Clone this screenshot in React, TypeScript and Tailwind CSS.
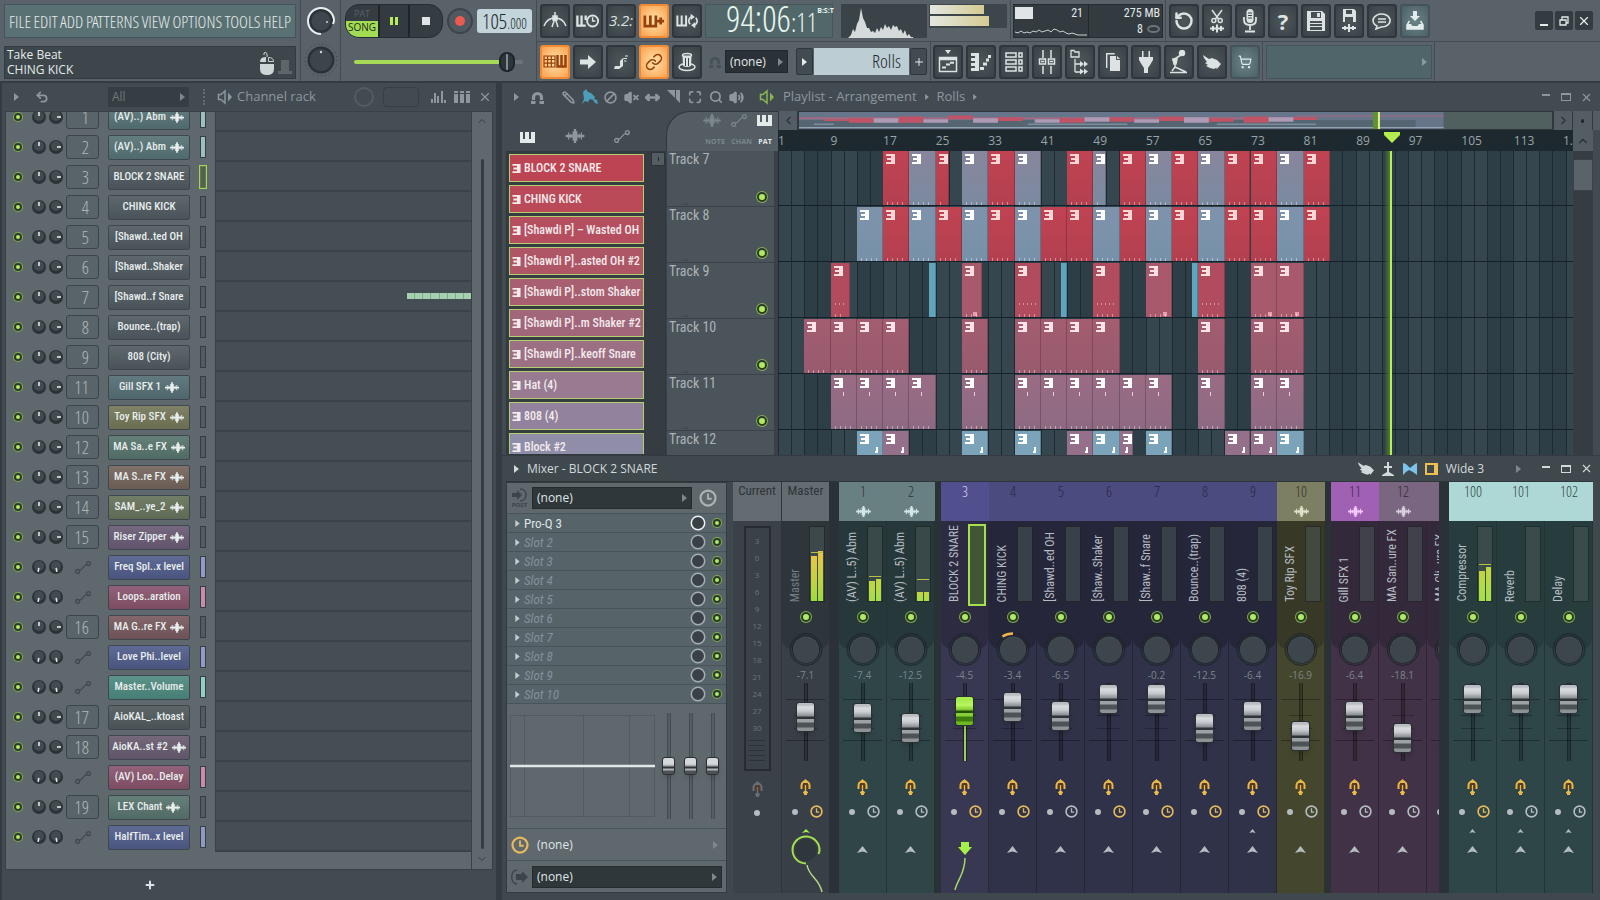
import type { ReactNode } from "react";
import {
  Ban,
  ChevronDown,
  ChevronLeft,
  ChevronRight,
  ChevronUp,
  Link,
  Maximize,
  MoveHorizontal,
  Pencil,
  Plus,
  RotateCcw,
  Search,
  ShoppingCart,
  Undo2,
  Volume2,
  VolumeX,
  X,
} from "lucide-react";

const NARROW =
  "[font-family:'Roboto_Condensed','Liberation_Sans_Narrow','Open_Sans_Condensed','Open_Sans',sans-serif]";
const THIN =
  "[font-family:'Open_Sans_Condensed_Light','Roboto_Condensed','Liberation_Sans_Narrow','Open_Sans_Condensed','Open_Sans',sans-serif]";

const BARS = 121;
const pct = (bars: number) => `${(bars / BARS) * 100}%`;

/* ---------- icons ---------- */

interface IconProps {
  className?: string;
}

const WaveIcon = ({ className = "w-4 h-3" }: IconProps) => (
  <svg viewBox="0 0 16 12" className={className} fill="currentColor">
    <path d="M0 5h16v2H0zM2 3h1v6H2zM4 4h1v4H4zM6 2h1v8H6zM7 0h2v12H7zM9 2h1v8H9zM11 4h1v4h-1zM13 3h1v6h-1z" />
  </svg>
);

const AutoIcon = ({ className = "w-4 h-3" }: IconProps) => (
  <svg viewBox="0 0 16 13" className={className} fill="none" stroke="currentColor" strokeWidth="1.3">
    <circle cx="2.6" cy="10.4" r="1.9" />
    <circle cx="13.4" cy="2.6" r="1.9" />
    <path d="M4.2 9.4c2-.5 2.600-1 3.800-2.900s2-2.500 3.600-3" />
  </svg>
);

const PianoIcon = ({ className = "w-4 h-3" }: IconProps) => (
  <svg viewBox="0 0 15 11" className={className} fill="currentColor">
    <path d="M0 0h3v7h2V0h1v0h3v7h2V0h4v11H0z" />
  </svg>
);

const ClipIcon = ({ className = "w-[9px] h-[10px]" }: IconProps) => (
  <svg viewBox="0 0 9 10" className={className} fill="currentColor">
    <path d="M0 0h9v10H0V8h5V6H1V4h4V2H0z" />
  </svg>
);

const MagnetIcon = ({ className = "w-[13px] h-[13px]" }: IconProps) => (
  <svg viewBox="0 0 13 13" className={className}>
    <path d="M2.500 9V6.500a4 4 0 0 1 8 0V9" fill="none" stroke="currentColor" strokeWidth="3.200" />
    <path d="M0 10h4.500v3H0zM8.500 10H13v3H8.500z" fill="currentColor" />
  </svg>
);

const Arrow = ({ className = "w-[5px] h-2" }: IconProps) => (
  <svg viewBox="0 0 5 8" className={className} fill="currentColor">
    <path d="M0 0l5 4-5 4z" />
  </svg>
);

const Clock = ({ className = "w-3 h-3" }: IconProps) => (
  <svg viewBox="0 0 12 12" className={className} fill="none" stroke="currentColor" strokeWidth="1.5">
    <circle cx="6" cy="6" r="5" />
    <path d="M6 3v3.500h2.500" strokeWidth="1.200" />
  </svg>
);

const Speaker = ({ className = "w-4 h-4" }: IconProps) => (
  <svg viewBox="0 0 16 16" className={className}>
    <path d="M8 2v12L4 10.500H1.500v-5H4z" fill="none" stroke="currentColor" strokeWidth="1.500" />
    <path d="M11 3.500l4 4.500-4 4.500z" fill="currentColor" />
  </svg>
);

const MetronomeIcon = () => (
  <svg viewBox="0 0 24 18" className="h-[18px] w-6" fill="none" stroke="currentColor" strokeWidth="1.500">
    <path d="M1 14Q4 6 12 6q8 0 11 8" />
    <path d="M12 0v5M9 15l3-9 3 9" />
    <path d="M10 4h4v4h-4z" fill="currentColor" />
  </svg>
);

const WaitIcon = () => (
  <svg viewBox="0 0 26 16" className="h-4 w-6" fill="none" stroke="currentColor">
    <path d="M1.500 2v11h9M6 2v11M10.500 2v5" strokeWidth="2.500" />
    <circle cx="18" cy="8" r="6" strokeWidth="2" />
    <path d="M18 4v4h3" strokeWidth="1.500" />
  </svg>
);

const OverdubIcon = () => (
  <svg viewBox="0 0 24 14" className="h-[14px] w-[22px]" fill="none" stroke="currentColor" strokeWidth="3">
    <path d="M2 1v11.500h12V1M8 1v11M15.500 7H23M19.300 3.300v7.400" />
  </svg>
);

const LoopIcon = () => (
  <svg viewBox="0 0 24 16" className="h-4 w-[22px]" fill="none" stroke="currentColor">
    <path d="M1.500 2v11H11V2M6.200 2v11" strokeWidth="2.200" />
    <path d="M16.500 3.500a5 5 0 0 0-1 8M20.500 12.500a5 5 0 0 0 1-8" strokeWidth="1.800" />
    <path d="M16 0l4.500 3.500L16 7zM21 9l-4.500 3.500L21 16z" fill="currentColor" stroke="none" />
  </svg>
);

const StepIcon = () => (
  <svg viewBox="0 0 24 14" className="h-[14px] w-6" fill="none" stroke="currentColor" strokeWidth="1.200">
    <path d="M1 1h11v11H1zM1 4.500h11M1 8.200h11M4.600 1v11M8.300 1v11" />
    <path d="M14.500 0v11.500h8V0M18.500 0v11" strokeWidth="2.500" />
  </svg>
);

const FatArrow = () => (
  <svg viewBox="0 0 16 14" className="h-[14px] w-4" fill="currentColor">
    <path d="M0 4.500h8V0l8 7-8 7V9.500H0z" />
  </svg>
);

const NoteIcon = () => (
  <svg viewBox="0 0 16 16" className="h-4 w-4" fill="currentColor">
    <path d="M1 15l1-3h5V7l3-3h1l-1 2v6l-4 3zM11 4h3v1h-3zM11 6.500h2.500v1H11zM12 1.500h3v1h-3z" />
  </svg>
);

const GlassIcon = () => (
  <svg viewBox="0 0 20 20" className="h-5 w-5" fill="none" stroke="currentColor" strokeWidth="1.500">
    <ellipse cx="10" cy="15" rx="8" ry="3.500" />
    <path d="M6 14L5.500 3.500h9L14 14q-4 2-8 0z" fill="currentColor" stroke="none" />
    <ellipse cx="10" cy="3.200" rx="4.500" ry="1.700" />
    <path d="M8.500 6v8M11.500 6v8" stroke="#3a4248" strokeWidth="1" />
  </svg>
);

const PlaylistIcon = () => (
  <svg viewBox="0 0 20 24" className="h-6 w-5" fill="none" stroke="currentColor">
    <path d="M7 0h6l-3 4z" fill="currentColor" stroke="none" />
    <path d="M1.500 7.500h17v14h-17z" strokeWidth="1.500" />
    <path d="M1.500 9h17" strokeWidth="2.500" />
    <path d="M4 17.500h4M8 14.500h4M12 12.800h4" strokeWidth="2" />
  </svg>
);

const PianoRollIcon = () => (
  <svg viewBox="0 0 20 18" className="h-[18px] w-5" fill="currentColor">
    <path d="M0 0h8v18H0v-3h4v-2H0v-3h4V8H0V5h4V3H0z" />
    <path d="M9 14h4v3H9zM12 9.500h4v3h-4zM15 5.500h3v3h-3zM17 2h3v3h-3z" />
  </svg>
);

const RackIcon = () => (
  <svg viewBox="0 0 18 20" className="h-5 w-[18px]" fill="none" stroke="currentColor" strokeWidth="1.500">
    <path d="M1 1h10v4H1zM1 8h10v4H1zM1 15h10v4H1zM14 1h3v4h-3zM14 8h3v4h-3zM14 15h3v4h-3z" />
  </svg>
);

const MixerIcon = () => (
  <svg viewBox="0 0 18 24" className="h-6 w-[18px]" fill="none" stroke="currentColor" strokeWidth="1.500">
    <path d="M5 0v8M5 16v8M13 0v8M13 16v8M1.500 9h6v5h-6zM10.500 9h6v5h-6zM3 11.500h3M12 11.500h3" />
  </svg>
);

const BrowserIcon = () => (
  <svg viewBox="0 0 20 26" className="h-[26px] w-5" fill="none" stroke="currentColor" strokeWidth="1.300">
    <path d="M1 1.500h3l1 1.500h4v5H1zM5 10v13M5 15h5M5 23h5" />
    <path d="M10 12l4 3-4 3zM14 12l4 3-4 3zM10 19.500l4 3-4 3zM14 19.500l4 3-4 3z" fill="currentColor" stroke="none" />
  </svg>
);

const PagesIcon = () => (
  <svg viewBox="0 0 14 18" className="h-[18px] w-[14px]" fill="currentColor">
    <path d="M4 3h6v4h4v11H4z" />
    <path d="M11 3l3 3h-3z" />
    <path d="M.7 15V.7h8" fill="none" stroke="currentColor" strokeWidth="1.400" />
  </svg>
);

const PlugIcon = () => (
  <svg viewBox="0 0 14 22" className="h-[22px] w-[14px]" fill="currentColor">
    <path d="M3 0h1.500v6H3zM9.500 0H11v6H9.500zM0 6h14v3l-3 5-2 3v5H5v-5l-2-3-3-5z" />
  </svg>
);

const LeverIcon = () => (
  <svg viewBox="0 0 18 24" className="h-6 w-[18px]" fill="none" stroke="currentColor" strokeWidth="1.500">
    <circle cx="12" cy="3" r="2.500" fill="currentColor" />
    <path d="M11 5L3 10l2 3v4l-3 4M5 17l11 5M0 22.500h17" />
    <path d="M3 9h4l-1 5H4z" fill="currentColor" />
  </svg>
);

const HandIcon = ({ className = "w-[18px] h-[14px]" }: IconProps) => (
  <svg viewBox="0 0 18 14" className={className} fill="currentColor">
    <path d="M0 0l6 4 3-1 5 2 3 3-1 3-5 3-4-1-4-2 2-1-3-2 2-1L1 3z" />
    <path d="M17 8l1 1-4 5-1-1z" />
  </svg>
);

const DownloadIcon = () => (
  <svg viewBox="0 0 18 20" className="h-5 w-[18px]" fill="currentColor">
    <path d="M7 0h4v5h3L9 10 4 5h3z" />
    <path d="M3.500 10L1 14v4h16v-4l-2.500-4" fill="none" stroke="currentColor" strokeWidth="1.500" />
    <path d="M1 13h4l1.500 2h5L13 13h4v5H1z" />
  </svg>
);

const SaveIcon = () => (
  <svg viewBox="0 0 18 20" className="h-5 w-[18px]" fill="currentColor">
    <path fillRule="evenodd" d="M0 0h15l3 3v17H0zM4 1v6h10V1zM3 10v9h12v-9z" />
    <path d="M10 2h3v4h-3zM3 12h12v1H3zM3 15h12v1H3z" />
  </svg>
);

const SaveWaveIcon = () => (
  <svg viewBox="0 0 16 24" className="h-6 w-4" fill="currentColor">
    <path fillRule="evenodd" d="M2 0h11l2 2v11H2zM5 1v4h6V1zM4 8v5h8V8z" />
    <path d="M1 18h14v2H1zM3 17h2v4H3zM7 15h2v8H7zM11 17h2v4h-2z" />
  </svg>
);

const ScissorsWave = () => (
  <svg viewBox="0 0 16 24" className="h-6 w-4" fill="currentColor">
    <path d="M3 1l6.500 9M13 1L6.500 10" fill="none" stroke="currentColor" strokeWidth="1.500" />
    <circle cx="4.800" cy="11.500" r="2" fill="none" stroke="currentColor" strokeWidth="1.400" />
    <circle cx="11.200" cy="11.500" r="2" fill="none" stroke="currentColor" strokeWidth="1.400" />
    <path d="M1 18.500h14v2H1zM3 17h2v5H3zM7 15.500h2v8H7zM11 17h2v5h-2z" />
  </svg>
);

const MicIcon = () => (
  <svg viewBox="0 0 14 24" className="h-6 w-[14px]">
    <rect x="3.500" y="0" width="7" height="14" rx="3.500" fill="currentColor" />
    <path d="M1 8v3q0 5 6 5t6-5V8M7 16v5M2 22.500h10" fill="none" stroke="currentColor" strokeWidth="1.800" />
    <path d="M5 4h4M5 6.500h4M5 9h4" stroke="#3a4248" strokeWidth="1" />
  </svg>
);

const BubbleIcon = () => (
  <svg viewBox="0 0 20 18" className="h-[18px] w-5" fill="none" stroke="currentColor" strokeWidth="1.600">
    <path d="M5 14a8.500 6.500 0 1 1 4 1l-5 2z" />
    <path d="M6 7h8M6 10h8" />
  </svg>
);

const RouteIcon = ({ className = "w-[11px] h-4 text-[#e8b848]" }: IconProps) => (
  <svg viewBox="0 0 11 16" className={className}>
    <path d="M1.500 10V6.500a4 4 0 0 1 8 0V10" fill="#5c3a1c" fillOpacity=".7" stroke="currentColor" strokeWidth="2" />
    <path d="M5.500 0l4 4h-8zM4 12h3v4H4z" fill="currentColor" />
    <path d="M5.500 6v8M3 13.500h5" fill="none" stroke="currentColor" strokeWidth="1.300" />
  </svg>
);

const UpTri = ({ className = "w-[11px] h-[7px]" }: IconProps) => (
  <svg viewBox="0 0 11 7" className={className} fill="currentColor">
    <path d="M5.500 0L11 7l-5.500-1.500L0 7z" />
  </svg>
);

/* ---------- small controls ---------- */

const Led = ({ label, big }: { label: string; big?: boolean }) => (
  <input
    type="checkbox"
    defaultChecked
    aria-label={label}
    className={`shrink-0 appearance-none rounded-full border-2 border-[#2c3a2a] bg-[#aeea62] ring-1 ring-[#7fae4c] ${
      big ? "h-[10px] w-[10px]" : "h-2 w-2"
    }`}
  />
);

const MiniKnob = ({ angle }: { angle: number }) => (
  <svg viewBox="0 0 14 14" className="h-[14px] w-[14px] shrink-0">
    <circle cx="7" cy="7" r="7" fill="#2c3338" />
    <circle cx="7" cy="6" r="5" fill="#434b51" />
    <path d="M7 6V2" stroke="#dfe6e8" strokeWidth="1.600" transform={`rotate(${angle} 7 7)`} />
  </svg>
);

const Knob = ({ pan }: { pan?: boolean }) => (
  <svg viewBox="0 0 36 36" className="-mb-[18px] h-9 w-9 shrink-0">
    <circle cx="18" cy="18.500" r="16" fill="#2b3238" fillOpacity=".4" stroke="#171c20" strokeOpacity=".6" />
    <circle cx="18" cy="18.500" r="14" fill="#1e2428" />
    <circle cx="18" cy="18.500" r="13" fill="#465056" />
    <circle cx="18" cy="19.200" r="12.800" fill="#3d464c" />
    {pan && <path d="M7.500 5.500Q12 2.500 18 2.500" fill="none" stroke="#eeb44e" strokeWidth="2.500" />}
  </svg>
);

interface PickProps {
  label: string;
  value: string;
  className: string;
}

const Pick = ({ label, value, className }: PickProps) => (
  <div className={`relative flex items-center ${className}`}>
    <select aria-label={label} className="h-full w-full appearance-none bg-transparent pl-1 pr-3 outline-none">
      <option>{value}</option>
    </select>
    <Arrow className="pointer-events-none absolute right-1 h-2 w-[5px] text-[#7d878c]" />
  </div>
);

const WindowButtons = ({ className = "" }: IconProps) => (
  <div className={`flex ${className}`}>
    <button aria-label="Minimize" className="flex h-5 w-5 items-center justify-center pb-1">
      <span className="h-[2px] w-2 bg-current" />
    </button>
    <button aria-label="Maximize" className="flex h-5 w-5 items-center justify-center">
      <span className="h-2 w-[10px] border border-t-2 border-current" />
    </button>
    <button aria-label="Close" className="flex h-5 w-5 items-center justify-center">
      <X size={13} />
    </button>
  </div>
);

interface ToolProps {
  label: string;
  children: ReactNode;
  on?: boolean;
  teal?: boolean;
}

const Tool = ({ label, children, on, teal }: ToolProps) => (
  <button
    aria-label={label}
    className={`flex h-[34px] w-[30px] shrink-0 items-center justify-center rounded-[3px] border-2 ${
      on
        ? "border-[#f08a35] bg-radial from-[#ffe3a8] to-[#f9a04c] text-[#96420c]"
        : teal
          ? "border-[#45545a] bg-radial from-[#6a8488] to-[#4c6064] text-[#e3ecec]"
          : "border-[#2f373d] bg-radial from-[#4d5759] to-[#3a4248] text-[#dde3e3]"
    }`}
  >
    {children}
  </button>
);

const Sep = () => <div className="w-px self-stretch bg-[#434c52]" />;

/* ---------- top bar ---------- */

const MENUS = ["FILE", "EDIT", "ADD", "PATTERNS", "VIEW", "OPTIONS", "TOOLS", "HELP"];

const TopBar = () => (
  <header className="flex h-[83px] border-b-2 border-[#343b41] bg-[#586268] text-[#e3eaea]">
    <div className="flex w-[300px] flex-col gap-2 py-1 pl-1 pr-1">
      <nav className={`flex h-[34px] shrink-0 items-center justify-between border border-[#44545a] bg-[#5a7173] px-1 text-[17px] ${THIN}`}>
        {MENUS.map((m) => (
          <a key={m} href="#" className="leading-none">
            {m}
          </a>
        ))}
      </nav>
      <div className="flex h-[33px] shrink-0 items-center justify-between border border-[#333b40] bg-[#3d464a] px-[2px] text-[12px] leading-[15px]">
        <div className="pb-[2px]">
          <div>Take Beat</div>
          <div>CHING KICK</div>
        </div>
        <div className="flex items-end gap-1 pr-px">
          <svg viewBox="0 0 14 24" className="h-6 w-[14px]" fill="#cdd5d6">
            <path d="M0 11q0-5 6-5v5H0zM0 13h14v5q0 6-7 6t-7-6z" />
            <path d="M8.500 6.500q5 0 5 4h-5zM7 6V3q-1-3-3-1v2" fill="none" stroke="#cdd5d6" />
          </svg>
          <svg viewBox="0 0 14 16" className="h-4 w-[14px]" fill="#5c666b">
            <path d="M3 1h8v11h3v3H0v-3h3z" />
          </svg>
        </div>
      </div>
    </div>
    <Sep />
    <div className="flex w-[39px] flex-col items-center justify-between py-[3px]">
      <svg viewBox="0 0 36 36" className="h-9 w-9">
        <circle cx="18" cy="18" r="12" fill="#2d3439" />
        <circle cx="18" cy="18" r="9.500" fill="#3e474d" />
        <path d="M18 31A13 13 0 1 1 31 18l-1 3" fill="none" stroke="#e9efef" strokeWidth="2" />
        <circle cx="24" cy="19" r="1" fill="#cfd6d8" />
      </svg>
      <svg viewBox="0 0 36 36" className="h-9 w-9">
        <circle cx="18" cy="18" r="16" fill="none" stroke="#394146" strokeDasharray="1 3" />
        <circle cx="18" cy="18" r="13.500" fill="#2b3237" />
        <circle cx="18" cy="18" r="11" fill="#3c454b" />
        <circle cx="18" cy="10" r="1.200" fill="#cfd6d8" />
      </svg>
    </div>
    <Sep />
    <div className="flex w-[195px] flex-col">
      <div className="flex h-[42px] items-center gap-1 pl-1">
        <div className="flex h-[34px] w-[98px] overflow-hidden rounded-[14px] border border-[#262c31] bg-[#353d43] text-[11px] leading-none">
          <button className="flex w-8 flex-col text-center">
            <span className="flex h-4 w-full items-center justify-center text-[9px] text-[#586268]">PAT</span>
            <span className="flex w-full flex-1 items-center justify-center bg-[#a2dc55] pb-1 text-[10px] text-[#1d2a16]">SONG</span>
          </button>
          <button aria-label="Pause" className="flex w-[32px] items-center justify-center gap-[2px] border-x-2 border-[#1f262b] bg-[#333b41]">
            <span className="h-2 w-[3px] bg-[#b5ec5c]" />
            <span className="h-2 w-[3px] bg-[#b5ec5c]" />
          </button>
          <button aria-label="Stop" className="flex flex-1 items-center justify-center">
            <span className="h-2 w-2 bg-[#dfe5e6]" />
          </button>
        </div>
        <button aria-label="Record" className="flex h-[26px] w-[26px] items-center justify-center rounded-full border-2 border-[#3b444a] bg-[#4f595f]">
          <span className="h-[10px] w-[10px] rounded-full bg-[#ee5a50]" />
        </button>
        <div className={`flex h-6 w-[55px] items-baseline justify-center rounded-[3px] bg-[#c3d4da] text-[#22292d] ${THIN}`}>
          <span className="text-[21px] leading-6">105</span>
          <span className="text-[14px] leading-6">.000</span>
        </div>
      </div>
      <div className="flex flex-1 items-center px-[13px]">
        <input
          type="range"
          aria-label="Master pitch"
          defaultValue={95}
          className="h-1 w-full appearance-none rounded-full bg-linear-to-r from-[#a6d956] from-90% to-[#6b757a] to-90% [&::-webkit-slider-thumb]:h-5 [&::-webkit-slider-thumb]:w-4 [&::-webkit-slider-thumb]:appearance-none [&::-webkit-slider-thumb]:rounded-full [&::-webkit-slider-thumb]:border-2 [&::-webkit-slider-thumb]:border-[#1f262a] [&::-webkit-slider-thumb]:bg-linear-to-r [&::-webkit-slider-thumb]:from-[#2e363b] [&::-webkit-slider-thumb]:from-40% [&::-webkit-slider-thumb]:via-[#c7d0d0] [&::-webkit-slider-thumb]:to-[#2e363b] [&::-webkit-slider-thumb]:to-60%"
        />
      </div>
    </div>
    <Sep />
    <div className="flex min-w-0 flex-1 flex-col">
      <div className="flex h-[42px] items-center border-b border-[#434c52]">
        <div className="flex items-center gap-[3px] px-[3px]">
          <Tool label="Metronome"><MetronomeIcon /></Tool>
          <Tool label="Wait for input"><WaitIcon /></Tool>
          <Tool label="Countdown"><span className="text-[15px] italic">3.2:</span></Tool>
          <Tool label="Overdub" on><OverdubIcon /></Tool>
          <Tool label="Loop record"><LoopIcon /></Tool>
        </div>
        <div className="flex h-[34px] w-[128px] items-center justify-between border border-[#46565a] bg-[#51676a] pl-5 pr-[2px] text-[#e6f5ee]">
          <div className={`flex items-baseline ${THIN}`}>
            <span className="text-[36px] leading-8">94:06</span>
            <span className="text-[26px] leading-8">:11</span>
          </div>
          <span className="self-start text-[7px] font-bold leading-[12px]">B:S:T</span>
        </div>
        <div className="flex items-start pl-2 pr-[3px]">
          <svg viewBox="0 0 86 34" className="h-[34px] w-[86px] bg-[#3a4348]" fill="#d5dadb">
            <path d="M7 34l3-3 2-6 2 3 2-8 2-4 2-12 2 10 2 4 2 6 2 0 2 4 2-1 2 2 2-5 2 4 2-5 2 3 2-6 2 4 2-2 2 4 2-5 2 2 2-1 2 5 2-2 2 5 2-4 2 6 2-2 2 3 2 0 1 3z" />
          </svg>
          <div className="ml-[2px] flex h-6 w-[78px] flex-col justify-center gap-[2px] bg-[#3d464b] pl-px">
            <div className="h-[9px] w-[54px] bg-linear-to-r from-[#e3e6e1] to-[#d5cb92]" />
            <div className="h-[10px] w-[59px] bg-linear-to-r from-[#e3e6e1] to-[#d5cb92]" />
          </div>
        </div>
        <Sep />
        <div className={`mx-[2px] flex h-[34px] w-[150px] border border-[#262d31] bg-[#333b40] text-[12px] leading-none ${NARROW}`}>
          <div className="flex w-[75px] flex-col justify-between border-r border-[#22292d] p-px">
            <div className="flex justify-between pr-1 pt-px">
              <span className="h-3 w-[18px] bg-[#dfe4e6]" />
              <span>21</span>
            </div>
            <svg viewBox="0 0 72 8" className="h-2 w-full" fill="none" stroke="#c8d0d2">
              <path d="M0 4l3 1 3-2 3 2 3-1 3 1 3-2 3 1 3-2 3 2 3-1 3-1 3 2 3-3 3 1 3 2 3-1 3 2 3 1 3-1 3 1 3 1h9" />
            </svg>
          </div>
          <div className="flex flex-1 flex-col items-end justify-between py-[2px] pr-[2px]">
            <span>275 MB</span>
            <span className="flex items-center gap-1">
              8
              <svg viewBox="0 0 13 8" className="h-2 w-[13px]" fill="none" stroke="#6b757a" strokeWidth="2">
                <ellipse cx="6.500" cy="4" rx="5.500" ry="3" />
              </svg>
            </span>
          </div>
        </div>
        <Sep />
        <div className="flex items-center gap-[3px] px-[3px]">
          <Tool label="Undo"><RotateCcw size={20} strokeWidth={3} /></Tool>
          <Tool label="Cut"><ScissorsWave /></Tool>
          <Tool label="Record audio"><MicIcon /></Tool>
          <Tool label="Help"><span className="text-[22px] font-bold leading-none">?</span></Tool>
          <Tool label="Save"><SaveIcon /></Tool>
          <Tool label="Render"><SaveWaveIcon /></Tool>
          <Tool label="News"><BubbleIcon /></Tool>
          <Tool label="Download" teal><DownloadIcon /></Tool>
        </div>
        <div className="ml-auto flex gap-[2px] pr-[7px]">
          <button aria-label="Minimize" className="flex h-[19px] w-[18px] items-end justify-center rounded-[2px] bg-[#343c42] pb-1">
            <span className="h-[2px] w-2 bg-[#e3eaea]" />
          </button>
          <button aria-label="Restore" className="flex h-[19px] w-[18px] items-center justify-center rounded-[2px] bg-[#343c42]">
            <svg viewBox="0 0 10 10" className="h-[10px] w-[10px]" fill="none" stroke="currentColor" strokeWidth="1.300">
              <path d="M1 4h6v5H1zM3 4V1h6v6H7" />
            </svg>
          </button>
          <button aria-label="Close" className="flex h-[19px] w-[18px] items-center justify-center rounded-[2px] bg-[#343c42]">
            <X size={14} />
          </button>
        </div>
      </div>
      <div className="flex flex-1 items-center">
        <div className="flex items-center gap-[3px] px-[3px]">
          <Tool label="Typing keyboard" on><StepIcon /></Tool>
          <Tool label="Auto scroll"><FatArrow /></Tool>
          <Tool label="Note slide"><NoteIcon /></Tool>
          <Tool label="Link" on><Link size={18} /></Tool>
          <Tool label="Multilink"><GlassIcon /></Tool>
        </div>
        <MagnetIcon className="ml-1 h-3 w-3 text-[#475157]" />
        <Pick label="Snap" value="(none)" className="ml-1 h-[23px] w-[63px] border border-[#22292d] bg-[#2b3237] text-[12px]" />
        <div className="ml-2 flex h-[27px] items-stretch gap-px">
          <button aria-label="Pattern menu" className="flex w-[17px] items-center justify-center rounded-[2px] border border-[#2f373d] bg-[#424b51]">
            <Arrow />
          </button>
          <button className={`w-[95px] bg-[#bccdd3] pr-2 text-right text-[19px] leading-none text-[#22292d] ${THIN}`}>Rolls</button>
          <button aria-label="Add pattern" className="flex w-[17px] items-center justify-center rounded-[2px] border border-[#2f373d] bg-[#424b51]">
            <Plus size={12} />
          </button>
        </div>
        <div className="ml-[3px] flex self-stretch"><Sep /></div>
        <div className="flex items-center gap-[3px] px-[2px]">
          <Tool label="Playlist"><PlaylistIcon /></Tool>
          <Tool label="Piano roll"><PianoRollIcon /></Tool>
          <Tool label="Channel rack"><RackIcon /></Tool>
          <Tool label="Mixer"><MixerIcon /></Tool>
          <Tool label="Browser"><BrowserIcon /></Tool>
          <Tool label="Project picker"><PagesIcon /></Tool>
          <Tool label="Plugin picker"><PlugIcon /></Tool>
          <Tool label="Tempo tapper"><LeverIcon /></Tool>
          <Tool label="Touch"><HandIcon /></Tool>
          <Tool label="Shop" teal><ShoppingCart size={14} /></Tool>
        </div>
        <Sep />
        <div className="ml-[3px] mr-[2px] flex h-[34px] w-[166px] items-center justify-end border border-[#44545a] bg-[#50656a] pr-1 text-[#8a9a9c]">
          <Arrow />
        </div>
        <Sep />
      </div>
    </div>
  </header>
);

/* ---------- channel rack ---------- */

interface Channel {
  name: string;
  num?: number;
  tone: string;
  wave?: boolean;
  level?: string;
  selected?: boolean;
}

const GREY = "from-[#5d676c] to-[#495359]";
const TEAL = "from-[#647e80] to-[#4f6a6c]";
const BLUE = "from-[#5f6b94] to-[#4a557f]";
const PINK = "from-[#91627a] to-[#7d4c62]";

const CHANNELS: Channel[] = [
  { num: 1, name: "(AV)..) Abm", tone: TEAL, wave: true, level: "bg-[#9cc0c0]" },
  { num: 2, name: "(AV)..) Abm", tone: TEAL, wave: true, level: "bg-[#9cc0c0]" },
  { num: 3, name: "BLOCK 2 SNARE", tone: GREY, selected: true },
  { num: 4, name: "CHING KICK", tone: GREY },
  { num: 5, name: "[Shawd..ted OH", tone: GREY },
  { num: 6, name: "[Shawd..Shaker", tone: GREY },
  { num: 7, name: "[Shawd..f Snare", tone: GREY },
  { num: 8, name: "Bounce..(trap)", tone: GREY },
  { num: 9, name: "808 (City)", tone: GREY },
  { num: 11, name: "Gill SFX 1", tone: "from-[#62797f] to-[#4f666c]", wave: true },
  { num: 10, name: "Toy Rip SFX", tone: "from-[#7f8266] to-[#6a6d50]", wave: true },
  { num: 12, name: "MA Sa..e FX", tone: "from-[#648078] to-[#4f6b64]", wave: true },
  { num: 13, name: "MA S..re FX", tone: "from-[#80726a] to-[#6a5c52]", wave: true },
  { num: 14, name: "SAM_..ye_2", tone: "from-[#727d68] to-[#5e6a54]", wave: true },
  { num: 15, name: "Riser Zipper", tone: "from-[#75687f] to-[#60536b]", wave: true },
  { name: "Freq Spl..x level", tone: BLUE, level: "bg-[#919acb]" },
  { name: "Loops..aration", tone: PINK, level: "bg-[#c98bab]" },
  { num: 16, name: "MA G..re FX", tone: "from-[#83676c] to-[#6c5256]", wave: true },
  { name: "Love Phi..level", tone: BLUE, level: "bg-[#919acb]" },
  { name: "Master..Volume", tone: "from-[#5c9489] to-[#467d74]", level: "bg-[#8fd0c3]" },
  { num: 17, name: "AioKAL_..ktoast", tone: "from-[#5d676a] to-[#495356]" },
  { num: 18, name: "AioKA..st #2", tone: "from-[#75687a] to-[#5f5468]", wave: true },
  { name: "(AV) Loo..Delay", tone: PINK, level: "bg-[#c98bab]" },
  { num: 19, name: "LEX Chant", tone: "from-[#667f79] to-[#526a65]", wave: true },
  { name: "HalfTim..x level", tone: BLUE, level: "bg-[#8c9ac4]" },
];

const ChannelRow = ({ ch, notes }: { ch: Channel; notes?: boolean }) => (
  <li className="flex h-[30px] items-center">
    <div className="flex w-[60px] items-center justify-between pl-2 pr-[3px]">
      <Led label={`${ch.name} on`} />
      <div className="flex gap-[3px]">
        <MiniKnob angle={ch.num ? 0 : 190} />
        <MiniKnob angle={ch.num ? 90 : 170} />
      </div>
    </div>
    <div className="flex w-[33px] justify-center">
      {ch.num ? (
        <span className={`flex h-6 w-full items-center justify-end rounded-[3px] border border-[#3c454b] bg-[#59636a] pr-[9px] text-[18px] text-[#aeb8bb] ${THIN}`}>
          {ch.num}
        </span>
      ) : (
        <AutoIcon className="h-[13px] w-4 text-[#3f484e]" />
      )}
    </div>
    <button
      className={`ml-[9px] flex h-[25px] w-[82px] items-center justify-center gap-1 overflow-hidden whitespace-nowrap rounded-[2px] border border-[#3e474d] bg-linear-to-b px-[3px] text-[11px] font-medium text-[#e8eded] ${NARROW} ${ch.tone}`}
    >
      <span>{ch.name}</span>
      {ch.wave && <WaveIcon className="h-[11px] w-[14px] shrink-0" />}
    </button>
    <div
      className={`ml-[9px] flex h-6 w-2 border-2 p-px ${
        ch.selected ? "border-[#a5d653] bg-[#56693f]" : "border-transparent"
      }`}
    >
      <span className={`-m-[2px] flex-1 border border-[#363e44] ${ch.level ?? "bg-[#525b61]"} ${ch.selected ? "opacity-60" : ""}`} />
    </div>
    <div className="ml-2 flex h-full flex-1 items-center justify-end border-b-2 border-l border-[#3b4349] bg-[#464e55]">
      {notes && (
        <div className="flex h-[6px] w-16 gap-px bg-[#7fa98a]">
          {Array.from({ length: 8 }, (_, i) => (
            <span key={i} className="flex-1 bg-[#a5cfb0]" />
          ))}
        </div>
      )}
    </div>
  </li>
);

const ChannelRack = () => (
  <section className="flex w-[498px] shrink-0 flex-col border-x-2 border-[#343b41] bg-[#434b52]">
    <div className="flex h-7 items-center px-3 text-[#8d979c]">
      <Arrow />
      <Undo2 size={14} strokeWidth={3} className="ml-4" />
      <Pick label="Channel filter" value="All" className="ml-[59px] h-5 w-[81px] bg-[#363d43] text-[12px] text-[#6d777c]" />
      <span className="ml-[14px] h-4 border-l-2 border-dotted border-[#646e74]" />
      <Speaker className="ml-3 h-4 w-4" />
      <h2 className="ml-1 text-[13px]">Channel rack</h2>
      <span className="ml-auto h-5 w-5 rounded-full border-2 border-[#535c62]" />
      <span className="ml-[9px] h-5 w-9 rounded-[4px] border border-[#373f45]" />
      <svg viewBox="0 0 15 12" className="ml-3 h-3 w-[15px]" fill="currentColor">
        <path d="M0 8h2v4H0zM3 2h2v10H3zM6 5h2v7H6zM10 0h2v12h-2zM13 9h2v3h-2z" />
      </svg>
      <svg viewBox="0 0 16 12" className="ml-2 h-3 w-4" fill="currentColor">
        <path d="M0 0h4v2H0zM0 3h4v9H0zM6 0h4v2H6zM6 3h4v9H6zM12 0h4v2h-4zM12 3h4v9h-4z" />
      </svg>
      <X size={14} className="-mr-2 ml-2" />
    </div>
    <div className="mx-[3px] flex flex-1 border border-[#394147] bg-[#5f686d]">
      <div className="min-w-0 flex-1 overflow-hidden border-r border-[#394147]">
        <ul className="-mt-[10px]">
          {CHANNELS.map((ch, i) => (
            <ChannelRow key={i} ch={ch} notes={i === 6} />
          ))}
        </ul>
      </div>
      <div className="flex w-5 flex-col items-center pb-1 pt-[3px] text-[#363e44]">
        <ChevronUp size={12} />
        <span className="mt-8 w-[3px] flex-1 rounded-full bg-[#363e44]" />
        <ChevronDown size={12} className="mt-1" />
      </div>
    </div>
    <div className="flex h-[30px] items-center pl-[142px] text-[#dfe5e6]">
      <button aria-label="Add channel"><Plus size={12} strokeWidth={4} /></button>
    </div>
  </section>
);

/* ---------- playlist ---------- */

const PATTERNS = [
  { name: "BLOCK 2 SNARE", tone: "bg-[#bd4452]" },
  { name: "CHING KICK", tone: "bg-[#ba4a58]" },
  { name: "[Shawdi P] – Wasted OH", tone: "bg-[#b54f60]" },
  { name: "[Shawdi P]..asted OH #2", tone: "bg-[#ae5666]" },
  { name: "[Shawdi P]..stom Shaker", tone: "bg-[#a85f70]" },
  { name: "[Shawdi P]..m Shaker #2", tone: "bg-[#a2667a]" },
  { name: "[Shawdi P]..keoff Snare", tone: "bg-[#9c7083]" },
  { name: "Hat (4)", tone: "bg-[#987a91]" },
  { name: "808 (4)", tone: "bg-[#92829d]" },
  { name: "Block #2", tone: "bg-[#8f8da8]" },
];

const TONES = {
  red: "bg-linear-to-b from-[#c04352] to-[#b3404f] text-[#ffd5d5]",
  grey: "bg-linear-to-b from-[#87869c] to-[#7b8aa0] text-white",
  blue: "bg-linear-to-b from-[#7e93ab] to-[#7691a9] text-white",
  crimson: "bg-[#b14c5e] text-[#ffe0e0]",
  rose: "bg-[#a85a6c] text-[#ffe0e0]",
  sky: "bg-[#5fa5bd] text-[#5fa5bd]",
  dusty: "bg-linear-to-b from-[#a35d70] to-[#995a6e] text-[#ffe5ea]",
  mauve: "bg-linear-to-b from-[#9a6c84] to-[#8d6a82] text-white",
  plum: "bg-[#94708a] text-white",
  steel: "bg-[#7ba3b9] text-white",
};

type Tone = keyof typeof TONES;
// start bar, end bar, tone
type Clip = [number, number, Tone];

const run = (tone: Tone, starts: number[]): Clip[] => starts.map((s) => [s, s + 4, tone]);

const TRACKS: { name: string; clips: Clip[] }[] = [
  {
    name: "Track 7",
    clips: [
      ...run("red", [17, 33, 45, 53, 61, 73, 81]),
      [25, 27, "red"],
      [69, 72.8, "red"],
      ...run("grey", [21, 29, 37, 57, 65, 77]),
      [49, 51, "grey"],
    ],
  },
  {
    name: "Track 8",
    clips: [
      ...run("blue", [13, 21, 29, 37, 49, 57, 65, 77]),
      ...run("red", [17, 25, 33, 41, 45, 53, 61, 73, 81]),
      [69, 72.8, "red"],
    ],
  },
  {
    name: "Track 9",
    clips: [
      [9, 12, "crimson"],
      [24, 25, "sky"],
      [29, 32, "rose"],
      [37, 41, "crimson"],
      [44, 45, "sky"],
      [49, 53, "crimson"],
      [57, 61, "rose"],
      [64, 65, "sky"],
      [65, 69, "crimson"],
      [73, 77, "rose"],
      [77, 81, "rose"],
    ],
  },
  { name: "Track 10", clips: run("dusty", [5, 9, 13, 17, 29, 37, 41, 45, 49, 65, 73, 77]) },
  { name: "Track 11", clips: run("mauve", [9, 13, 17, 21, 29, 37, 41, 45, 49, 53, 57, 65, 73, 77]) },
  {
    name: "Track 12",
    clips: [
      ...run("steel", [13, 29, 37, 49, 57, 77]),
      ...run("plum", [17, 45, 73]),
      [53, 55, "plum"],
      [69, 72.8, "plum"],
    ],
  },
];

const RULER = Array.from({ length: 15 }, (_, i) => 1 + i * 8);

const ClipBox = ({ clip: [start, end, tone] }: { clip: Clip }) => (
  <div
    className={`absolute inset-y-0 overflow-hidden border-r border-black/20 ${TONES[tone]}`}
    style={{ left: pct(start - 1), width: pct(end - start) }}
  >
    {tone !== "sky" && <ClipIcon className="ml-[3px] mt-[3px] h-[10px] w-[9px]" />}
    {tone === "mauve" && <span className="ml-3 mt-1 block h-1 w-px bg-white/70" />}
    {(tone === "steel" || tone === "plum") && (
      <span className="absolute right-1 top-4 h-[6px] w-[3px] border-b-2 border-r-2 border-white" />
    )}
    {tone === "crimson" && (
      <span className="absolute inset-x-1 bottom-3 h-[2px] bg-[repeating-linear-gradient(90deg,#ffffff66_0_1px,transparent_1px_4px)]" />
    )}
    {tone === "rose" && <span className="absolute bottom-px right-1 h-1 w-1 bg-[#e5a0b0]" />}
    <span className="absolute inset-x-1 bottom-0 h-[3px] bg-[repeating-linear-gradient(90deg,#ffffff66_0_1px,transparent_1px_5px)]" />
  </div>
);

const MiniMap = () => (
  <svg viewBox="0 0 757 19" preserveAspectRatio="none" className="h-[19px] min-w-0 flex-1 border border-[#2f373d] bg-[#50605f]">
    <path d="M0 0h648v19H0z" fill="#66758a" />
    <path d="M0 9h620v8H0z" fill="#566572" />
    <path d="M0 6h500v2H0zM500 4h148v1H500z" fill="#a36a83" />
    <path d="M25 8h25v2H25zM50 7h25v5H50zM100 5h25v7h-25zM150 4h25v4h-25zM200 6h25v4h-25zM262 7h25v5h-25zM312 6h25v5h-25zM362 5h25v5h-25zM412 7h25v4h-25zM447 5h25v7h-25zM497 6h24v3h-24z" fill="#c15367" />
    <path d="M75 7h25v5H75zM125 8h25v4h-25zM175 7h25v5h-25zM237 8h25v4h-25zM287 6h25v5h-25zM337 8h25v4h-25zM387 6h25v6h-25zM472 6h25v5h-25z" fill="#ad9ab4" />
    <path d="M15 13h20v1H15zM230 13h100v1H230zM420 13h100v1H420zM0 17h648v1H0z" fill="#9fb6c6" />
    <path d="M577 0h5v19h-5z" fill="#5f9136" />
    <path d="M582 0h2v19h-2z" fill="#e4f77a" />
  </svg>
);

const Picker = () => (
  <div className="flex w-[160px] shrink-0 flex-col">
    <div className="flex h-[40px] items-end justify-between pb-2 pl-[14px] pr-9 text-[#8d979c]">
      <PianoIcon className="h-[11px] w-[15px] text-[#e3eaea]" />
      <WaveIcon className="h-[14px] w-5" />
      <AutoIcon className="h-[13px] w-4" />
    </div>
    <div className="flex h-[304px] overflow-hidden border border-[#31393e] bg-[#353d42]">
      <ul className="flex flex-1 flex-col gap-[3px] pl-[2px] pt-[2px]">
        {PATTERNS.map((p) => (
          <li key={p.name}>
            <button
              className={`flex h-7 w-[135px] items-center gap-[3px] whitespace-nowrap border border-[#b5cf6e] pl-[2px] text-[12px] font-medium text-[#f3eaec] ${NARROW} ${p.tone}`}
            >
              <ClipIcon className="h-[9px] w-[9px] shrink-0" />
              {p.name}
            </button>
          </li>
        ))}
      </ul>
      <div className="w-[14px]">
        <span className="flex h-[14px] items-center justify-center border border-[#2c3439] bg-[#535d63]">
          <span className="h-1 w-px bg-[#22292d]" />
        </span>
      </div>
    </div>
  </div>
);

const PLAYLIST_TOOLS = [
  { label: "Draw", icon: <Pencil size={13} strokeWidth={3} className="-scale-x-100" /> },
  {
    label: "Paint",
    icon: (
      <svg viewBox="0 0 16 16" className="h-4 w-4" fill="#4d9cb8">
        <path d="M1 3l3-3 2 3 3 1 4 4-1 2 3 1 1 4-3-1-2-3-3-1-2 3-3-1-3 3 2-5z" />
      </svg>
    ),
  },
  { label: "Delete", icon: <Ban size={13} strokeWidth={3} className="-scale-x-100" /> },
  { label: "Mute", icon: <VolumeX size={15} strokeWidth={3} fill="currentColor" /> },
  { label: "Slip", icon: <MoveHorizontal size={15} strokeWidth={4} /> },
  {
    label: "Slice",
    icon: (
      <svg viewBox="0 0 14 14" className="h-[14px] w-[14px]" fill="currentColor">
        <path d="M0 0h8v8zM9 0h4v13L9 9z" />
      </svg>
    ),
  },
  { label: "Select", icon: <Maximize size={14} strokeWidth={3} /> },
  { label: "Zoom", icon: <Search size={14} strokeWidth={3} /> },
  { label: "Playback", icon: <Volume2 size={15} strokeWidth={3} fill="currentColor" /> },
];

const Playlist = () => (
  <section className="flex flex-col bg-[#434b52]">
    <div className="flex h-7 items-center pl-3 pr-1 text-[#8d979c]">
      <Arrow />
      <MagnetIcon className="ml-3 mr-[14px] h-[13px] w-[13px]" />
      {PLAYLIST_TOOLS.map((t) => (
        <button key={t.label} aria-label={t.label} className="flex w-[21px] items-center justify-center">
          {t.icon}
        </button>
      ))}
      <Speaker className="ml-3 mr-2 h-4 w-4 text-[#8ab652]" />
      <h2 className="flex items-center gap-2 text-[13px]">
        Playlist - Arrangement <Arrow className="h-[6px] w-1" /> Rolls <Arrow className="h-[6px] w-1" />
      </h2>
      <WindowButtons className="ml-auto" />
    </div>
    <div className="flex pl-1">
      <Picker />
      <div className="flex min-w-0 flex-1 flex-col">
        <div className="flex h-10">
          <div className="flex w-[112px] shrink-0 flex-col justify-between rounded-tl-[24px] border-l border-t border-[#2f373d] bg-[#535d63] pb-1 pr-[6px] pt-[2px] text-[#7b858a]">
            <div className="flex items-center justify-end gap-[10px]">
              <WaveIcon className="h-[13px] w-[18px]" />
              <AutoIcon className="h-[13px] w-4" />
              <PianoIcon className="h-[11px] w-[15px] text-[#e3eaea]" />
            </div>
            <div className="flex justify-end gap-[6px] text-[7px] font-bold tracking-wide">
              <span>NOTE</span>
              <span>CHAN</span>
              <span className="text-[#e3eaea]">PAT</span>
            </div>
          </div>
          <div className="flex min-w-0 flex-1 flex-col">
            <div className="flex h-[19px] bg-[#535d63] text-[#2b3237]">
              <button aria-label="Scroll left" className="flex w-5 items-center justify-center border-x border-[#31393e]">
                <ChevronLeft size={13} />
              </button>
              <MiniMap />
              <button aria-label="Scroll right" className="flex w-5 items-center justify-center border-x border-[#31393e]">
                <ChevronRight size={13} />
              </button>
              <span className="mr-[7px] flex w-5 items-center justify-center border-r border-[#31393e]">
                <span className="h-1 w-[3px] rounded-full bg-[#22292d]" />
              </span>
            </div>
            <div className="flex h-[21px]">
              <div className="relative min-w-0 flex-1 overflow-hidden bg-[#1e292f] text-[12px] text-[#98a4a8]">
                {RULER.map((b) => (
                  <span key={b} className="absolute top-1 leading-[14px]" style={{ left: pct(b - 1) }}>
                    {b}
                  </span>
                ))}
                <span className="absolute right-0 top-1 leading-[14px]">1.</span>
                <svg viewBox="0 0 16 12" className="absolute top-[2px] h-3 w-4 -translate-x-1/2" style={{ left: pct(93.45) }} fill="#b4ee4c">
                  <path d="M0 0h16v3L8 11 0 3z" />
                </svg>
              </div>
              <span className="mr-[7px] flex w-5 items-center justify-center bg-[#535d63] text-[#2b3237]">
                <ChevronUp size={14} />
              </span>
            </div>
          </div>
        </div>
        <div className="flex h-[304px] overflow-hidden">
          <div className="min-w-0 flex-1">
            <div className="relative">
              <div className="absolute inset-y-0 left-[112px] right-0 flex overflow-hidden bg-[#2e3f48]">
                {Array.from({ length: 61 }, (_, i) => (
                  <span
                    key={i}
                    className={`shrink-0 border-l border-[#1d2a31] ${i % 4 < 2 ? "bg-[#36464f]" : "bg-[#2e3e47]"}`}
                    style={{ width: pct(2) }}
                  />
                ))}
              </div>
              {TRACKS.map((t) => (
                <div key={t.name} className="flex h-14">
                  <div className="flex w-[112px] shrink-0 justify-between border-b border-l border-r-4 border-[#3a4248] bg-[#4b545a] pl-[2px] pr-[7px] text-[#aab3b6]">
                    <div className="flex flex-col justify-between">
                      <span className={`text-[14px] leading-4 ${NARROW}`}>{t.name}</span>
                      <span className="pl-3 text-[10px] leading-[10px] text-[#353d42]">...</span>
                    </div>
                    <span className="flex items-end pb-1">
                      <Led label={`${t.name} on`} big />
                    </span>
                  </div>
                  <div className="relative mb-px min-w-0 flex-1 border-b border-[#15202a]">
                    {t.clips.map((c) => (
                      <ClipBox key={c[0]} clip={c} />
                    ))}
                  </div>
                </div>
              ))}
              <div className="absolute inset-y-0 left-[112px] right-0">
                <span
                  className="absolute inset-y-0 w-[8px] -translate-x-full border-r-2 border-[#b9ec5a] bg-linear-to-l from-[#4f7f2c] to-transparent"
                  style={{ left: pct(93.45) }}
                />
              </div>
            </div>
          </div>
          <div className="mr-[7px] w-5 shrink-0 bg-[#353d42] pt-2">
            <span className="block h-8 border border-[#3a4248] bg-[#596369]" />
          </div>
        </div>
      </div>
    </div>
  </section>
);

/* ---------- mixer ---------- */

interface Strip {
  num: string;
  name?: string;
  head: string;
  upper: string;
  lower: string;
  db?: string;
  fader?: number;
  wave?: string;
  meter?: [number, number];
  peak?: number;
  clock?: boolean;
  arrows?: number;
  pan?: boolean;
  selected?: boolean;
}

const G1 = { head: "bg-[#688081] text-[#2a3538]", upper: "bg-[#27383a]", lower: "bg-[#2f4547]", wave: "text-[#d5e6e6]" };
const G2 = { head: "bg-[#4c4b80] text-[#252842]", upper: "bg-[#252639]", lower: "bg-[#303249]" };
const G3 = { head: "bg-[#7d7f63] text-[#33352a]", upper: "bg-[#373926]", lower: "bg-[#44472d]", wave: "text-[#e0e2cc]" };
const G4 = { upper: "bg-[#34283b]", lower: "bg-[#423247]" };
const G5 = { head: "bg-[#aed8d5] text-[#33474a]", upper: "bg-[#263c3d]", lower: "bg-[#2e4648]" };

const GROUPS: Strip[][] = [
  [
    { ...G1, num: "1", name: "(AV) L..5) Abm", db: "-7.4", fader: 28, meter: [20, 22], peak: 24, arrows: 1 },
    { ...G1, num: "2", name: "(AV) L..5) Abm", db: "-12.5", fader: 18, meter: [9, 9], peak: 21, arrows: 1 },
  ],
  [
    { head: "bg-[#524f8e] text-[#d9daf5]", upper: "bg-[#2c2b42]", lower: "bg-[#383852]", num: "3", name: "BLOCK 2 SNARE", db: "-4.5", fader: 35, clock: true, selected: true },
    { ...G2, num: "4", name: "CHING KICK", db: "-3.4", fader: 39, clock: true, arrows: 1, pan: true },
    { ...G2, num: "5", name: "[Shawd..ed OH", db: "-6.5", fader: 30, arrows: 1 },
    { ...G2, num: "6", name: "[Shaw..Shaker", fader: 47, clock: true, arrows: 1 },
    { ...G2, num: "7", name: "[Shaw..f Snare", db: "-0.2", fader: 47, clock: true, arrows: 1 },
    { ...G2, num: "8", name: "Bounce..(trap)", db: "-12.5", fader: 18, clock: true, arrows: 1 },
    { ...G2, num: "9", name: "808 (4)", db: "-6.4", fader: 30, clock: true, arrows: 2 },
    { ...G3, num: "10", name: "Toy Rip SFX", db: "-16.9", fader: 10, arrows: 1 },
  ],
  [
    { ...G4, head: "bg-[#a061b4] text-[#3f2449]", wave: "text-[#f3c9ff]", num: "11", name: "Gill SFX 1", db: "-6.4", fader: 30, arrows: 1 },
    { ...G4, head: "bg-[#7a6680] text-[#352a38]", wave: "text-[#d9cfdf]", num: "12", name: "MA San..ure FX", db: "-18.1", fader: 8, arrows: 1 },
  ],
];

const SENDS: Strip[] = [
  { ...G5, num: "100", name: "Compressor", fader: 47, meter: [30, 34], peak: 36, clock: true, arrows: 2 },
  { ...G5, num: "101", name: "Reverb", fader: 47, arrows: 2 },
  { ...G5, num: "102", name: "Delay", fader: 47, arrows: 2 },
];

const FADER =
  "appearance-none bg-transparent [writing-mode:vertical-lr] [direction:rtl] [&::-webkit-slider-thumb]:appearance-none [&::-webkit-slider-thumb]:rounded-[3px] [&::-webkit-slider-thumb]:border [&::-webkit-slider-thumb]:border-[#2a2f33] [&::-webkit-slider-thumb]:shadow-md";

const CAP_SILVER =
  "[&::-webkit-slider-thumb]:bg-[linear-gradient(#b9bcc0_0_2px,#d9dcdf_4px,#c9ccd0_8px,#8a8f94_13px,#2f3438_14px_16px,#9da2a6_16px_19px,#4d5257_20px_24px,#8d9297_25px)]";
const CAP_GREEN =
  "[&::-webkit-slider-thumb]:bg-[linear-gradient(#a9ec50_0_4px,#b9f760_8px,#7cc82c_13px,#245006_14px_16px,#86cf37_16px_19px,#3c7d0e_20px_24px,#6fb824_25px)]";

const Fader = ({ label, value, green }: { label: string; value: number; green?: boolean }) => (
  <div className="relative flex h-[78px] w-full justify-center">
    <span className="absolute inset-x-1 bottom-5 top-4 border-y border-black/30" />
    <span className="absolute inset-x-3 bottom-8 top-8 border-y border-black/25" />
    <span className="absolute inset-y-0 w-1 border-x border-black/30 bg-black/20" />
    {green && <span className="absolute bottom-0 top-1/2 w-[2px] bg-[#9ccf55]" />}
    <input
      type="range"
      aria-label={label}
      max={48}
      defaultValue={value}
      className={`relative h-[78px] w-[19px] [&::-webkit-slider-thumb]:h-[30px] [&::-webkit-slider-thumb]:w-[19px] ${FADER} ${
        green ? CAP_GREEN : CAP_SILVER
      }`}
    />
  </div>
);

interface MeterProps {
  meter?: [number, number];
  peak?: number;
  selected?: boolean;
}

const Meter = ({ meter, peak, selected }: MeterProps) => (
  <div
    className={`relative flex items-end gap-px px-px ${
      selected
        ? "-mb-1 -mr-px h-[82px] w-[18px] border-2 border-[#a6e04f] bg-[#3f5735]"
        : "h-[76px] w-4 border border-black/40 bg-[#4c5a5a]/50"
    }`}
  >
    {peak && <span className="absolute inset-x-px h-px bg-[#b9c23e]" style={{ bottom: peak }} />}
    {meter?.map((h, i) => (
      <span
        key={i}
        className={`flex-1 ${h > 40 ? "bg-linear-to-t from-[#9ddb3e] to-[#e8c546]" : "bg-linear-to-t from-[#a2e048] to-[#c3d63e]"}`}
        style={{ height: h }}
      />
    ))}
  </div>
);

const MixStrip = ({ s }: { s: Strip }) => (
  <div className={`flex w-12 shrink-0 flex-col border-r border-black/25 ${s.lower}`}>
    <div className={`-mr-px flex h-[39px] flex-col items-center gap-2 pt-[2px] text-[15px] leading-[14px] ${s.head} ${THIN}`}>
      <span>{s.num}</span>
      {s.wave && <WaveIcon className={`h-[11px] w-[15px] ${s.wave}`} />}
    </div>
    <div className={`flex h-[128px] flex-col items-center rounded-b-[10px] ${s.upper}`}>
      <div className="flex h-[84px] w-full shrink-0 items-end justify-between pb-[3px] pl-1 pr-[3px]">
        <span className={`rotate-180 whitespace-nowrap text-[12px] leading-[18px] text-[#b4bcc4] [writing-mode:vertical-rl] ${NARROW}`}>
          {s.name}
        </span>
        <Meter meter={s.meter} peak={s.peak} selected={s.selected} />
      </div>
      <div className="flex h-[26px] shrink-0 items-center pb-[2px]">
        <Led label={`${s.name} on`} big />
      </div>
      <Knob pan={s.pan} />
    </div>
    <div className="mt-[18px] h-4 text-center text-[10px] leading-4 text-[#7b858c]">{s.db}</div>
    <Fader label={`${s.name} volume`} value={s.fader ?? 0} green={s.selected} />
    <div className="mt-[18px] flex justify-center">
      <RouteIcon />
    </div>
    <div className="mt-[9px] flex h-[15px] items-center justify-end gap-3 pr-[6px] text-[#b4bcc0]">
      <span className="h-[6px] w-[6px] rounded-full bg-current" />
      <Clock className={`h-[13px] w-[13px] ${s.clock ? "text-[#e6b95c]" : ""}`} />
    </div>
    <div className="flex flex-1 flex-col items-center pt-[10px] text-[#b4bcc0]">
      <span className="h-[17px]">{s.arrows === 2 && <UpTri className="h-1 w-[7px]" />}</span>
      {s.arrows && <UpTri />}
      {s.selected && (
        <svg viewBox="0 0 24 48" className="-mt-1 h-12 w-6">
          <path d="M8 0h8v5h3l-7 8-7-8h3z" fill="#a6f04a" />
          <path d="M12 16c0 16-8 22-10 32" fill="none" stroke="#a4d86a" strokeWidth="1.500" />
        </svg>
      )}
    </div>
  </div>
);

const SCALE = ["3", "0", "3", "6", "9", "12", "15", "18", "21", "24", "27", "30"];

const Master = () => (
  <div className="flex shrink-0">
    <div className="flex w-12 flex-col items-center bg-[#3a4148]">
      <div className={`h-[39px] w-full bg-[#646c72] pt-[2px] text-center text-[13px] leading-[14px] text-[#2d3439] ${NARROW}`}>Current</div>
      <div className="mt-[5px] flex h-[245px] w-[27px] flex-col items-center gap-[8px] border-2 border-[#262c31] pt-2 text-[8px] leading-[9px] text-[#6c757b]">
        {SCALE.map((n, i) => (
          <span key={i}>{n}</span>
        ))}
        <span className="mb-1 w-4 flex-1 bg-[repeating-linear-gradient(#2c3338_0_1px,transparent_1px_5px)]" />
      </div>
      <RouteIcon className="mt-[10px] h-4 w-[11px] text-[#666f75]" />
      <span className="mt-[13px] h-[6px] w-[6px] rounded-full bg-[#b4bcc0]" />
    </div>
    <div className="flex w-12 flex-col border-l border-[#2f363b] bg-[#383f46]">
      <div className={`h-[39px] bg-[#646c72] pt-[2px] text-center text-[13px] leading-[14px] text-[#2d3439] ${NARROW}`}>Master</div>
      <div className="flex h-[128px] flex-col items-center rounded-b-[10px] bg-[#2f363b]">
        <div className="flex h-[84px] w-full shrink-0 items-end justify-between pb-[3px] pl-1 pr-1">
          <span className={`rotate-180 text-[12px] leading-[18px] text-[#737d83] [writing-mode:vertical-rl] ${NARROW}`}>Master</span>
          <Meter meter={[45, 50]} peak={48} />
        </div>
        <div className="flex h-[26px] shrink-0 items-center pb-[2px]">
          <Led label="Master on" big />
        </div>
        <Knob />
      </div>
      <div className="mt-[18px] h-4 text-center text-[10px] leading-4 text-[#7b858c]">-7.1</div>
      <Fader label="Master volume" value={29} />
      <div className="mt-[18px] flex justify-center">
        <RouteIcon />
      </div>
      <div className="mt-[9px] flex h-[15px] items-center justify-end gap-3 pr-[6px] text-[#b4bcc0]">
        <span className="h-[6px] w-[6px] rounded-full bg-current" />
        <Clock className="h-[13px] w-[13px] text-[#e6b95c]" />
      </div>
      <svg viewBox="0 0 40 64" className="mx-auto mt-[10px] h-16 w-10">
        <path d="M20 0l4 4-4-1-4 1z" fill="#a6f04a" />
        <circle cx="20" cy="21" r="11" fill="#30373c" />
        <path d="M20 34.500A13.500 13.500 0 1 1 33.500 22l-1 3" fill="none" stroke="#a4e04f" strokeWidth="2" />
        <path d="M21 36c2 12 12 13 15 27" fill="none" stroke="#b2d884" strokeWidth="1.500" />
      </svg>
    </div>
  </div>
);

const SLOTS = ["Pro-Q 3", "Slot 2", "Slot 3", "Slot 4", "Slot 5", "Slot 6", "Slot 7", "Slot 8", "Slot 9", "Slot 10"];

const FxPanel = () => (
  <div className="flex w-[221px] shrink-0 flex-col border border-[#333b40] bg-[#5f686d] text-[13px] text-[#dfe5e6]">
    <div className="flex h-[30px] items-center gap-[7px] pl-1">
      <div className="flex w-[17px] flex-col items-center text-[6px] font-bold leading-[6px] text-[#3b4449]">
        <svg viewBox="0 0 16 14" className="h-[14px] w-4" fill="currentColor">
          <path d="M0 5h5V2l5 5-5 5V9H0z" />
          <path d="M8 1c8 0 8 12 0 12" fill="none" stroke="currentColor" strokeWidth="1.500" />
        </svg>
        POST
      </div>
      <Pick label="Input" value="(none)" className="-ml-[3px] h-[22px] w-[160px] border border-[#252c30] bg-[#2f373b] text-[12px]" />
      <Clock className="h-[18px] w-[18px] text-[#aab3b6]" />
    </div>
    <ul className="border-b border-[#49535a]">
      {SLOTS.map((name, i) => (
        <li key={name} className="flex h-[19px] items-center border-t border-[#49535a] bg-[#566469] pl-2 pr-[5px]">
          <Arrow className="h-[7px] w-[5px] text-[#c3cccf]" />
          <span className={`ml-1 flex-1 text-[13px] leading-none ${NARROW} ${i ? "italic text-[#84909a]" : ""}`}>{name}</span>
          <svg viewBox="0 0 16 16" className="mr-[7px] h-4 w-4">
            <circle cx="8" cy="8" r="6.700" fill="#394147" stroke={i ? "#a5aeb1" : "#eef2f2"} strokeWidth="1.500" />
          </svg>
          <Led label={`${name} slot on`} />
        </li>
      ))}
    </ul>
    <div className="flex h-[124px] items-center justify-between pl-[3px] pr-[6px]">
      <svg viewBox="0 0 145 102" className="h-[102px] w-[145px]" fill="none" stroke="#495359">
        <path d="M.5.5h144v101H.5zM14.500 0v102M73.500 0v102M119.500 0v102" strokeOpacity=".6" />
        <path d="M0 51h145" stroke="#e0e7e8" strokeWidth="2.500" />
      </svg>
      <div className="flex h-[106px] gap-[7px]">
        {["Low", "Mid", "High"].map((b) => (
          <div key={b} className="relative flex w-[15px] justify-center">
            <span className="absolute inset-y-0 w-1 border-x border-[#434c52] bg-[#545d63]" />
            <input
              type="range"
              aria-label={b}
              className={`relative h-[106px] w-[13px] [&::-webkit-slider-thumb]:h-[18px] [&::-webkit-slider-thumb]:w-[13px] ${FADER} [&::-webkit-slider-thumb]:bg-[linear-gradient(#d5d8da_0_6px,#9a9fa4_8px,#2f3438_9px_10px,#b0b5b8_11px_12px,#4d5257_13px)]`}
            />
          </div>
        ))}
      </div>
    </div>
    <div className="flex h-8 items-center border-t border-[#49535a] px-1 text-[12px]">
      <Clock className="h-[18px] w-[18px] text-[#e6b95c]" />
      <Pick label="Latency" value="(none)" className="ml-1 flex-1" />
    </div>
    <div className="flex h-8 items-center gap-1 border-t border-[#49535a] pl-1 pr-1">
      <svg viewBox="0 0 17 16" className="h-4 w-[17px]" fill="#3b4449">
        <path d="M5 5h6V2l6 6-6 6v-3H5z" />
        <path d="M6 1C-1 1-1 15 6 15" fill="none" stroke="#3b4449" strokeWidth="1.500" />
      </svg>
      <Pick label="Output" value="(none)" className="h-[22px] flex-1 border border-[#252c30] bg-[#2f373b] text-[12px]" />
    </div>
  </div>
);

const Mixer = () => (
  <section className="flex flex-1 flex-col border-t border-[#343b41] bg-[#3f484d] pb-[7px] pl-1">
    <div className="flex h-[25px] items-center pl-2 pr-1 text-[#d2d9db]">
      <Arrow />
      <h2 className="ml-2 text-[12px]">Mixer - BLOCK 2 SNARE</h2>
      <div className="ml-auto flex items-center">
        <div className="mr-[3px] grid grid-cols-4">
          <span className="flex w-[22px] items-center justify-center"><HandIcon className="h-[13px] w-4" /></span>
          <span className="flex w-[22px] items-center justify-center">
            <svg viewBox="0 0 12 14" className="h-[14px] w-3" fill="currentColor">
              <path d="M5 0h2v4h3v2H7v4l5 3v1H0v-1l5-3V6H2V4h3z" />
            </svg>
          </span>
          <span className="flex w-[22px] items-center justify-center">
            <svg viewBox="0 0 14 12" className="h-3 w-[14px]" fill="#7cc4ea">
              <path d="M0 0l3 1 4 4 5-4 2-1v12l-4-3-4-2-3 2-3 3z" />
            </svg>
          </span>
          <span className="flex w-[22px] items-center justify-center">
            <span className="h-3 w-[13px] border-2 border-r-4 border-[#eebf50]" />
          </span>
        </div>
        <span className="text-[12px]">Wide 3</span>
        <Arrow className="ml-8 mr-[15px] h-2 w-[5px] text-[#7d878c]" />
        <WindowButtons />
      </div>
    </div>
    <div className="mr-[7px] flex flex-1 border-t border-[#2f363b]">
      <FxPanel />
      <div className="ml-[6px] flex min-w-0 flex-1 bg-[#2a3237]">
        <Master />
        <div className="ml-[10px] flex min-w-0 flex-1 gap-[6px] overflow-hidden">
          {GROUPS.map((g, i) => (
            <div key={i} className="flex shrink-0">
              {g.map((s) => (
                <MixStrip key={s.num} s={s} />
              ))}
            </div>
          ))}
          <div className="-ml-[6px] flex shrink-0">
            <MixStrip s={{ ...G4, head: "bg-[#7a6680] text-[#352a38]", num: "", name: "MA Cli..ure FX", fader: 8 }} />
          </div>
        </div>
        <div className="ml-[10px] flex shrink-0">
          {SENDS.map((s) => (
            <MixStrip key={s.num} s={s} />
          ))}
        </div>
      </div>
    </div>
  </section>
);

export default function App() {
  return (
    <div className="flex min-h-screen flex-col bg-[#343b41] text-[#dfe5e6] [font-family:'Open_Sans','Noto_Sans',sans-serif]">
      <TopBar />
      <main className="flex flex-1">
        <ChannelRack />
        <div className="ml-1 flex min-w-0 flex-1 flex-col">
          <Playlist />
          <Mixer />
        </div>
      </main>
    </div>
  );
}
